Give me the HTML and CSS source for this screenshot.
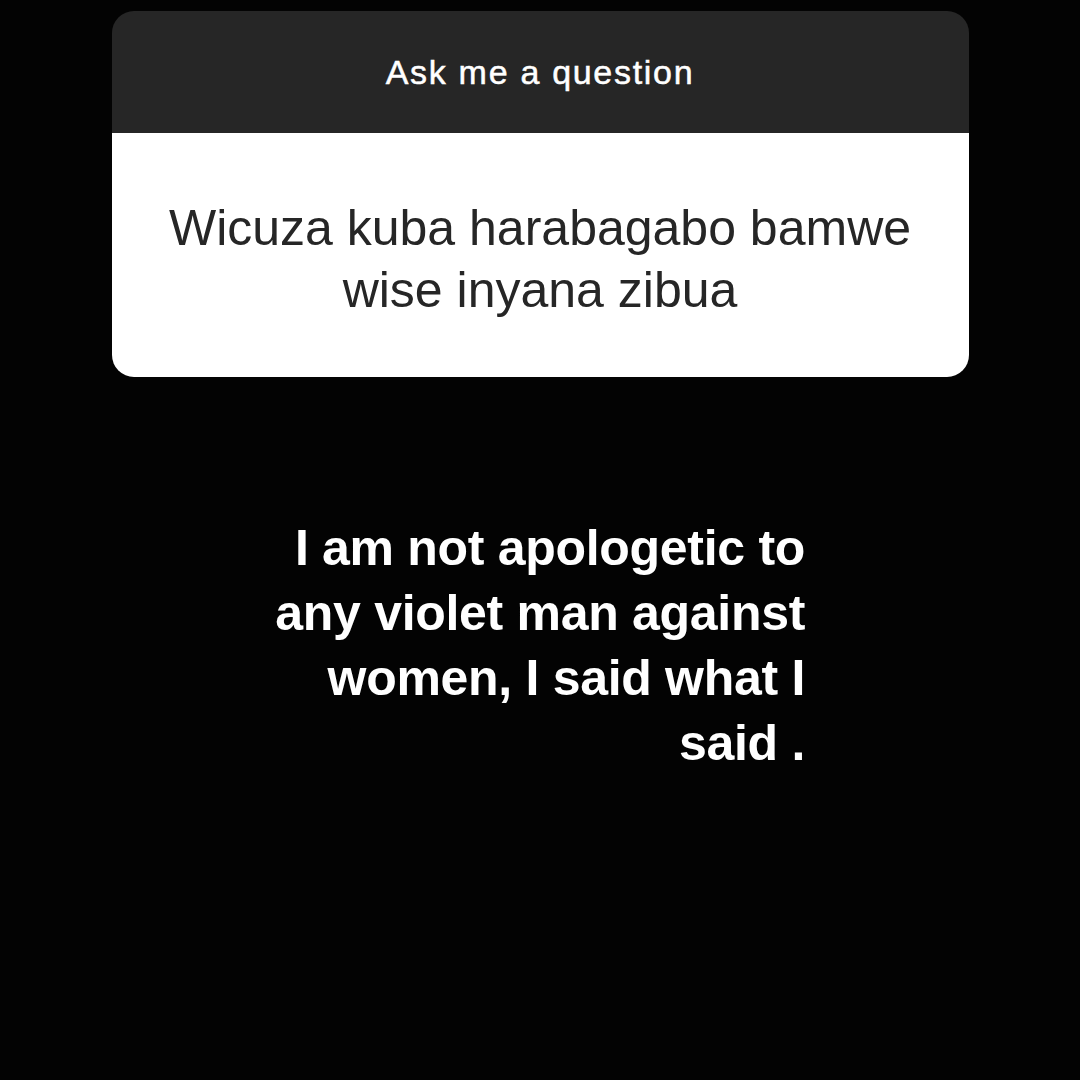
FILE: index.html
```html
<!DOCTYPE html>
<html lang="en">
<head>
    <meta charset="UTF-8">
    <meta name="viewport" content="width=device-width, initial-scale=1.0">
    <title>Ask me a question</title>
    <link rel="stylesheet" href="styles.css">
</head>
<body>

    <!-- Question Sticker -->
    <section class="question-card">
        <div class="question-head">Ask me a question</div>
        <div class="question-body">
            <p>Wicuza kuba harabagabo bamwe<br>wise inyana zibua</p>
        </div>
    </section>

    <!-- Answer -->
    <section class="answer">
        <p>I am not apologetic to<br>any violet man against<br>women, I said what I<br>said .</p>
    </section>

</body>
</html>
```

FILE: styles.css
```css
/* Global Styles */
* {
    margin: 0;
    padding: 0;
    box-sizing: border-box;
}

body {
    font-family: 'Liberation Sans', Arial, sans-serif;
    background-color: #030303;
    color: #fff;
    width: 1080px;
    height: 1080px;
    overflow: hidden;
}

.question-card {
    width: 857px;
    margin: 11px auto 0;
    border-radius: 22px;
    overflow: hidden;
}

.question-head {
    height: 122px;
    background-color: #262626;
    color: #fff;
    font-size: 34px;
    letter-spacing: 1.7px;
    -webkit-text-stroke: 0.5px #fff;
    display: flex;
    align-items: center;
    justify-content: center;
}

.question-body {
    height: 244px;
    background-color: #fff;
    color: #262626;
    display: flex;
    align-items: center;
    justify-content: center;
    text-align: center;
    padding-top: 8px;
}

.question-body p {
    font-size: 50px;
    line-height: 62px;
}

.answer {
    width: 805px;
    padding-top: 139px;
    text-align: right;
}

.answer p {
    font-size: 50px;
    font-weight: 700;
    line-height: 65px;
    letter-spacing: -0.3px;
}
```
